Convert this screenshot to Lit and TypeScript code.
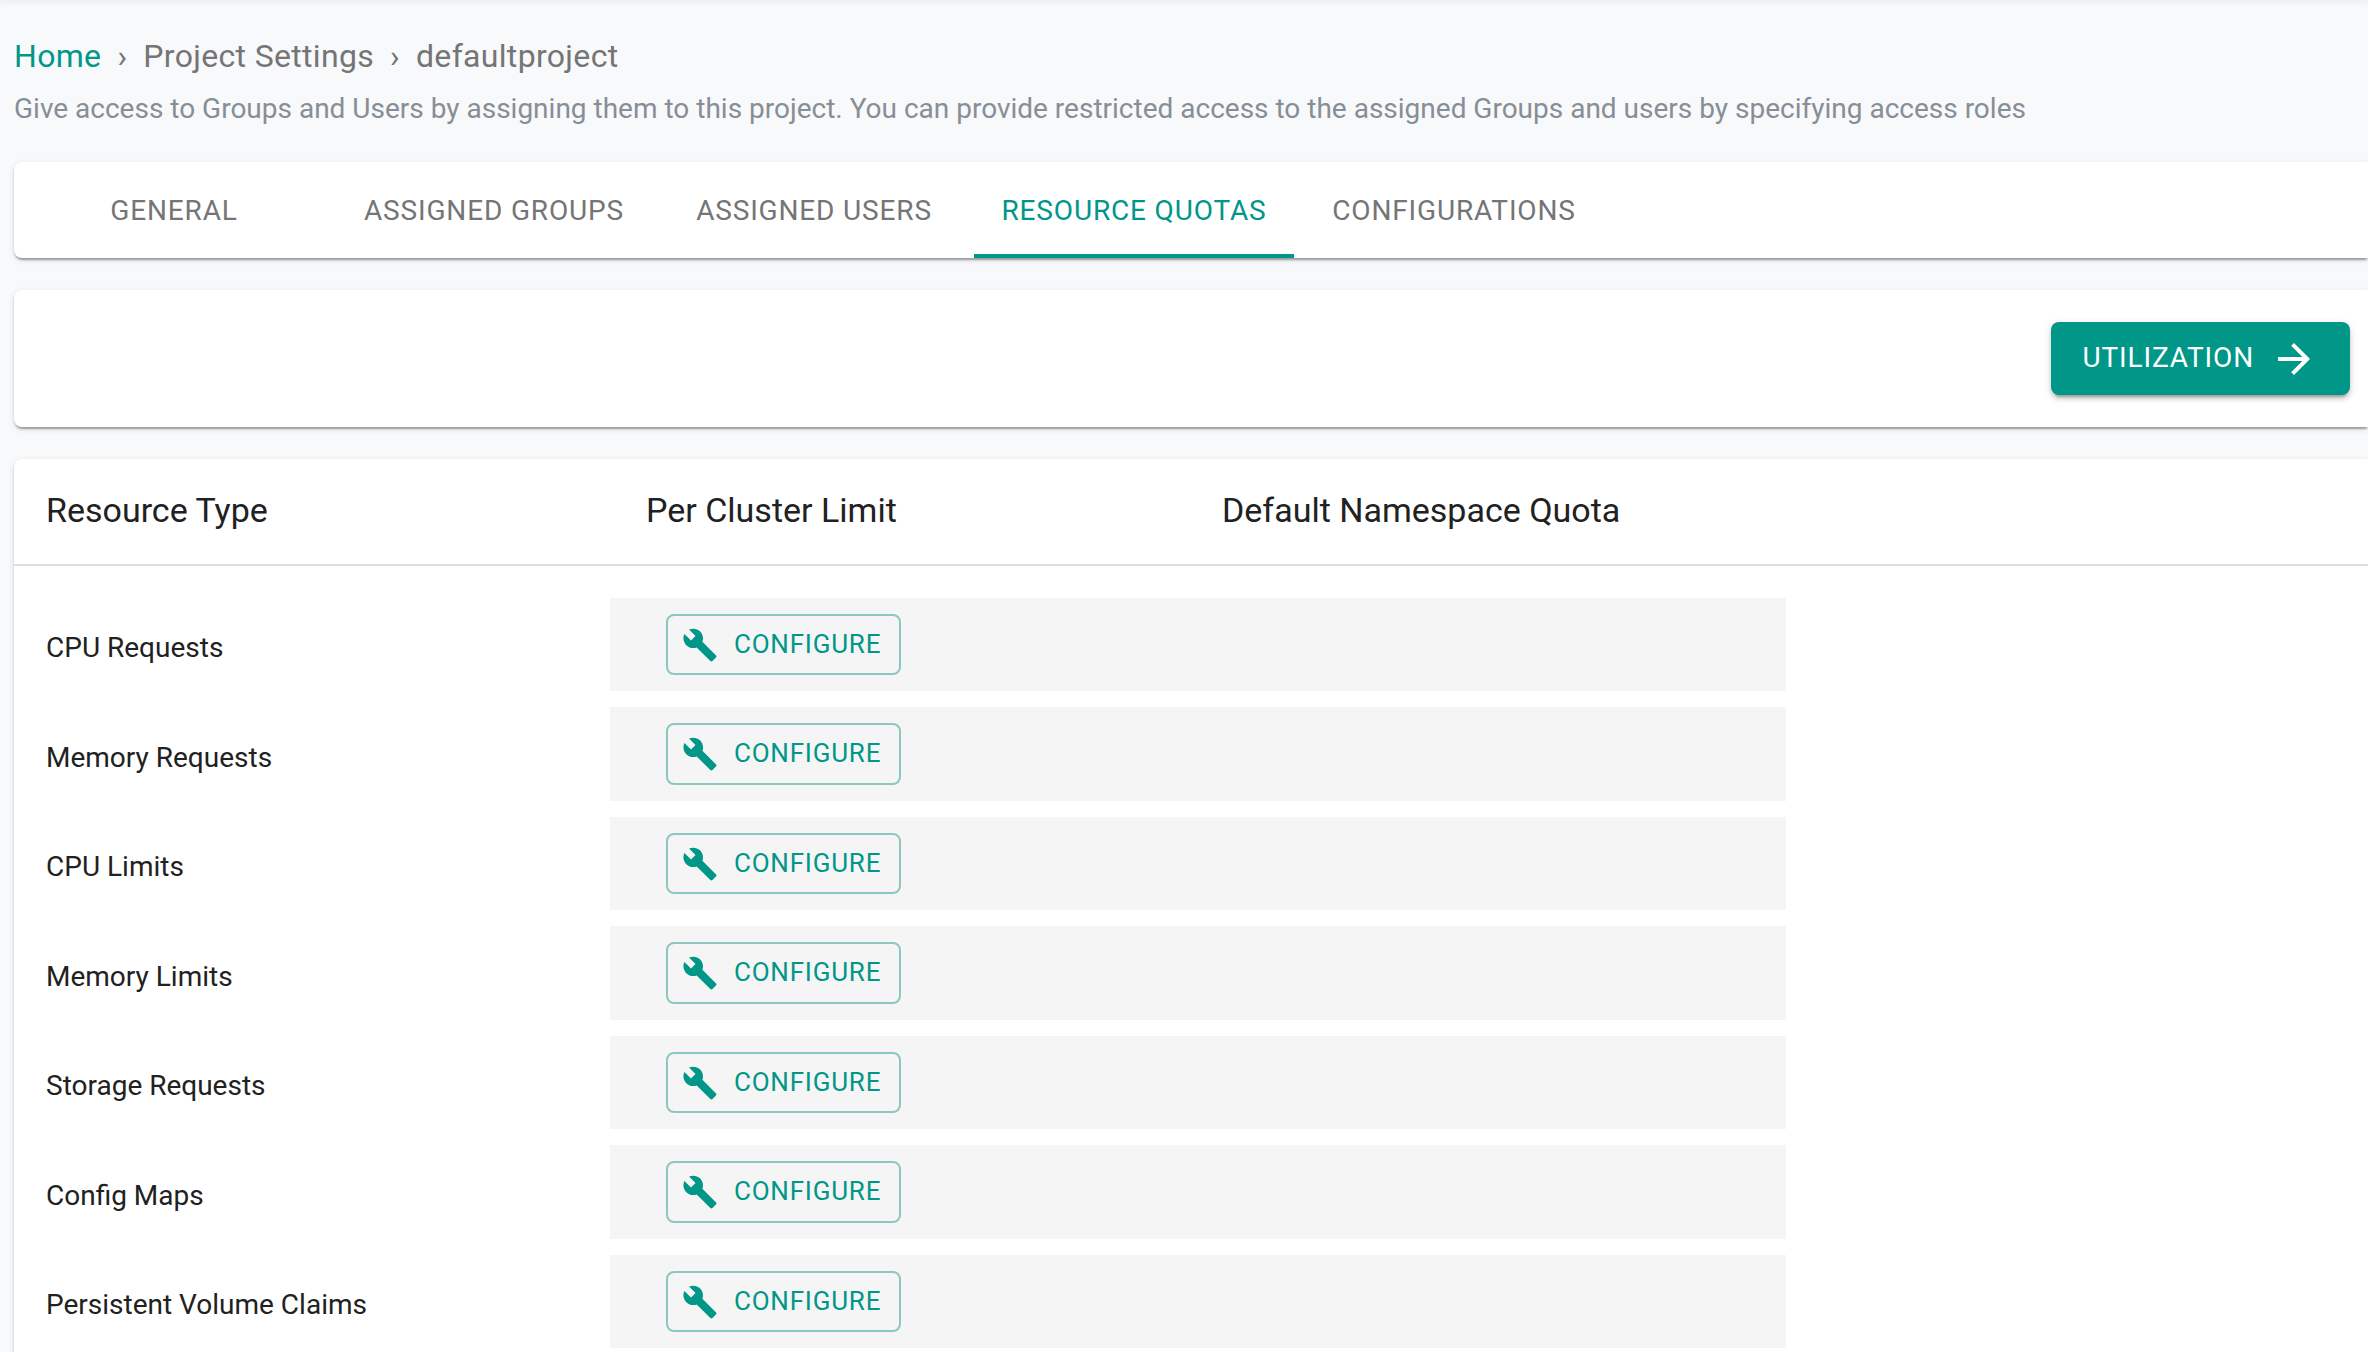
import { LitElement, html, css, svg } from "lit";
import { customElement, state } from "lit/decorators.js";

const TABS = ["General", "Assigned Groups", "Assigned Users", "Resource Quotas", "Configurations"];

const RESOURCES = [
  "CPU Requests",
  "Memory Requests",
  "CPU Limits",
  "Memory Limits",
  "Storage Requests",
  "Config Maps",
  "Persistent Volume Claims",
];

const wrench = svg`<path d="M22.7 19l-9.1-9.1c.9-2.3.4-5-1.5-6.9-2-2-5-2.4-7.4-1.3L9 6 6 9 1.6 4.7C.4 7.1.9 10.1 2.9 12.1c1.9 1.9 4.6 2.4 6.9 1.5l9.1 9.1c.4.4 1 .4 1.4 0l2.3-2.3c.5-.4.5-1.1.1-1.4z"/>`;
const arrow = svg`<path d="M12 4l-1.41 1.41L16.17 11H4v2h12.17l-5.58 5.59L12 20l8-8z"/>`;

@customElement("app-root")
export class AppRoot extends LitElement {
  static styles = css`
    :host {
      display: block;
      box-sizing: border-box;
      height: 100vh;
      overflow: hidden;
      padding: 32px 0 0 14px;
      background: #f8f9fb;
      box-shadow: inset 0 8px 8px -8px rgba(0, 0, 0, 0.08);
      color: #212121;
      font-family: Roboto, "Liberation Sans", sans-serif;
      font-size: 28px;
    }
    * {
      box-sizing: border-box;
    }
    button {
      font: inherit;
      text-transform: uppercase;
      letter-spacing: 0.03em;
      cursor: pointer;
    }
    svg {
      display: block;
      fill: currentColor;
    }
    .crumbs {
      display: flex;
      gap: 16px;
      margin: 0;
      padding: 0;
      list-style: none;
      font-size: 32px;
      line-height: 48px;
      letter-spacing: 0.01em;
      color: #757575;
    }
    .crumbs a {
      color: #009688;
      text-decoration: none;
    }
    .intro {
      margin: 8px 0 0;
      line-height: 42px;
      color: #868e96;
    }
    .card {
      background: #fff;
      border-radius: 8px 0 0 8px;
      box-shadow:
        0 4px 2px -2px rgba(0, 0, 0, 0.2),
        0 2px 2px 0 rgba(0, 0, 0, 0.14),
        0 2px 6px 0 rgba(0, 0, 0, 0.12);
    }
    .tabs {
      display: flex;
      margin-top: 32px;
    }
    .tab {
      width: 320px;
      height: 96px;
      padding: 4px 0 0;
      border: 0;
      border-bottom: 4px solid transparent;
      background: none;
      color: #757575;
    }
    .tab.active {
      color: #009688;
      border-bottom-color: #009688;
    }
    .actions {
      display: flex;
      justify-content: flex-end;
      margin-top: 32px;
      padding: 32px 18px 32px 32px;
    }
    .utilization {
      display: flex;
      align-items: center;
      gap: 16px;
      height: 73px;
      padding: 0 32px;
      border: 0;
      border-radius: 8px;
      background: #009688;
      color: #fff;
      box-shadow:
        0 6px 2px -4px rgba(0, 0, 0, 0.2),
        0 4px 4px 0 rgba(0, 0, 0, 0.14),
        0 2px 10px 0 rgba(0, 0, 0, 0.12);
    }
    .quotas {
      display: block;
      margin-top: 32px;
    }
    .quotas thead,
    .quotas tbody {
      display: block;
    }
    .head {
      display: grid;
      grid-template-columns: 632fr 576fr 1146fr;
      align-items: center;
      height: 107px;
      border-bottom: 2px solid #e0e0e0;
    }
    .head th {
      padding: 0 0 4px;
      font-size: 34px;
      font-weight: 400;
      line-height: 48px;
      text-align: left;
    }
    .head th:first-child,
    .row th {
      padding-left: 32px;
    }
    .quotas tbody {
      padding: 32px 0;
    }
    .row {
      display: grid;
      grid-template-columns: 596fr 576fr 600fr 582fr;
      align-items: stretch;
      height: 93px;
      margin-bottom: 16px;
    }
    .row:nth-child(even) {
      height: 94px;
    }
    .row th {
      align-self: center;
      padding-top: 8px;
      font-weight: 400;
      line-height: 40px;
      text-align: left;
    }
    .row td {
      padding: 16px 56px;
      background: #f5f5f5;
    }
    .configure {
      display: flex;
      align-items: center;
      gap: 16px;
      height: 100%;
      padding: 0 18px 0 14px;
      border: 2px solid #8cc8c0;
      border-radius: 8px;
      background: none;
      color: #009688;
      font-size: 26px;
    }
    .label {
      padding-bottom: 2px;
    }
  `;

  @state() private active = 3;

  render() {
    return html`
      <nav aria-label="Breadcrumb">
        <ol class="crumbs">
          <li><a href="#home">Home</a></li>
          <li aria-hidden="true">›</li>
          <li>Project Settings</li>
          <li aria-hidden="true">›</li>
          <li>defaultproject</li>
        </ol>
      </nav>
      <p class="intro">
        Give access to Groups and Users by assigning them to this project. You can provide restricted access to the assigned Groups and users by specifying access roles
      </p>
      <div class="card tabs" role="tablist">
        ${TABS.map(
          (name, i) => html`<button
            class="tab ${i === this.active ? "active" : ""}"
            role="tab"
            aria-selected=${i === this.active}
            @click=${() => (this.active = i)}
          >${name}</button>`
        )}
      </div>
      <div class="card actions">
        <button class="utilization">
          <span class="label">Utilization</span>
          <svg width="48" height="48" viewBox="0 0 24 24" aria-hidden="true">${arrow}</svg>
        </button>
      </div>
      <table class="card quotas">
        <thead>
          <tr class="head">
            <th scope="col">Resource Type</th>
            <th scope="col">Per Cluster Limit</th>
            <th scope="col">Default Namespace Quota</th>
          </tr>
        </thead>
        <tbody>
          ${RESOURCES.map(
            (name) => html`<tr class="row">
              <th scope="row">${name}</th>
              <td>
                <button class="configure">
                  <svg width="36" height="36" viewBox="0 0 24 24" aria-hidden="true">${wrench}</svg>
                  <span class="label">Configure</span>
                </button>
              </td>
              <td></td>
            </tr>`
          )}
        </tbody>
      </table>
    `;
  }
}
